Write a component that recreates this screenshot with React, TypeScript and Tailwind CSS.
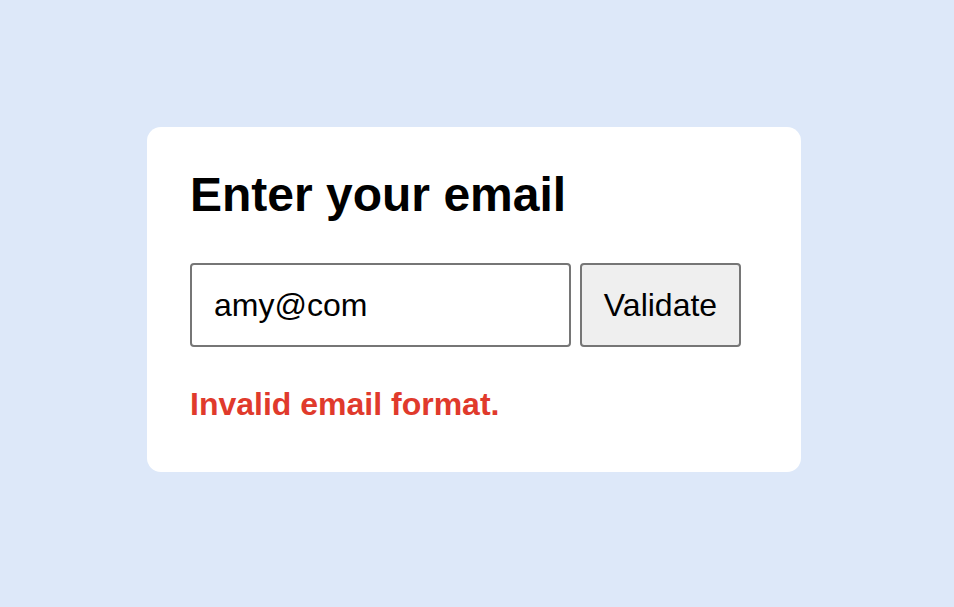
export default function App() {
  return (
    <div className="min-h-screen bg-[#dde8f9] pl-[147px] pt-[127px] font-['Liberation_Sans',Arial,sans-serif]">
      <div className="h-[345px] w-[654px] rounded-[14px] bg-white pl-[43px] pt-[40px]">
        <h1 className="text-[48px] font-bold leading-[55px] text-black">Enter your email</h1>
        <div className="mt-[41px] flex gap-[9px]">
          <input
            className="h-[84px] w-[381px] rounded-[4px] border-2 border-[#767676] bg-white px-[22px] text-[32px] text-black outline-none"
            defaultValue="amy@com"
            type="text"
          />
          <button
            className="h-[84px] w-[161px] rounded-[4px] border-2 border-[#767676] bg-[#efefef] text-[32px] text-black"
            type="button"
          >
            Validate
          </button>
        </div>
        <p className="mt-[39px] text-[32px] font-bold leading-[37px] text-[#e03a2c]">Invalid email format.</p>
      </div>
    </div>
  );
}
